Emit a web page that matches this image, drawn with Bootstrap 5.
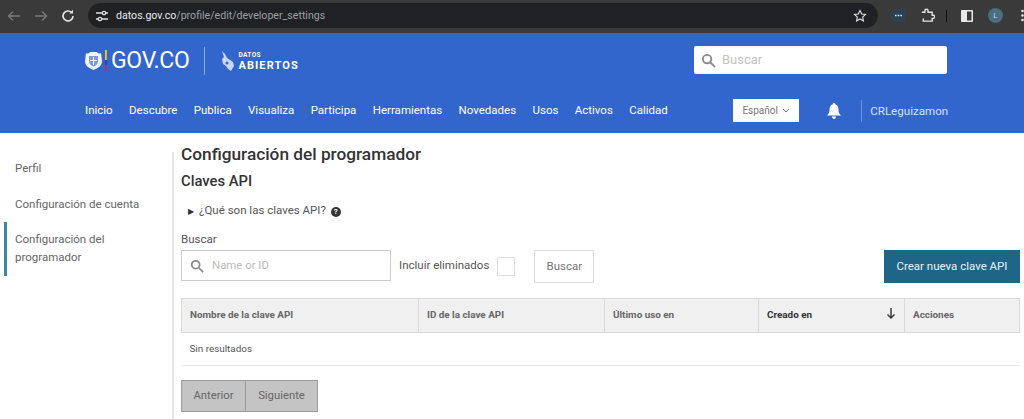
<!DOCTYPE html>
<html lang="es">
<head>
  <meta charset="UTF-8">
  <title>Configuración del programador</title>
  <link rel="stylesheet" href="https://cdn.jsdelivr.net/npm/bootstrap@5.3.3/dist/css/bootstrap.min.css">
  <style>
    html, body { height: 419px; overflow: hidden; }
    body { font-family: Roboto, "Liberation Sans", sans-serif; color: #4b4b4b; background: #fff; }

    /* browser bar */
    .browser-bar { height: 33px; background: #3a3a3a; padding: 3px 0 5px 6px; }
    .bar-btn { width: 16px; height: 16px; flex: none; margin-right: 11px; }
    .omnibox { width: 790px; height: 25px; margin-left: 1px; flex: none; border-radius: 13px; background: #202124; padding: 0 11px 0 7px; font-size: 10.6px; color: #9aa0a6; }
    .omnibox b { font-weight: 400; color: #e8eaed; }
    .url-text { margin-left: 7px; }
    .tool-a { margin-left: 14px; flex: none; }
    .tool-b { margin-left: 15px; flex: none; }
    .tool-sep { width: 1px; height: 12px; margin-left: 11px; background: #111; flex: none; }
    .tool-c { margin-left: 14px; flex: none; }
    .tool-d { margin-left: 15px; flex: none; }
    .tool-e { margin-left: 18px; flex: none; }
    .avatar-dot { width: 15px; height: 15px; border-radius: 50%; background: #4a6d80; color: #c9d8e0; font-size: 8px; line-height: 15px; text-align: center; }

    /* blue header */
    .site-head { height: 100px; background: #3366cc; color: #fff; padding: 0 77px 0 85px; }
    .brand-row { height: 55px; padding-top: 14px; }
    .brand-gov { font-size: 23px; line-height: 28px; letter-spacing: -.3px; margin-left: 3px; }
    .brand-sep { width: 1px; height: 28px; background: #8fa9e0; margin: 0 16px 0 15px; }
    .brand-map { margin-right: 3px; }
    .brand-datos { font-weight: 700; margin-top: 1px; }
    .brand-datos small { display: block; font-size: 6.5px; line-height: 8px; letter-spacing: .4px; }
    .brand-datos span { display: block; font-size: 11px; line-height: 13px; letter-spacing: 1.1px; }
    .head-search { width: 253px; height: 28px; margin-top: -1px; background: #fff; border-radius: 2px; padding-left: 7px; color: #c2c2c2; font-size: 13px; }
    .head-search span { margin-left: 6px; }
    .nav-row { height: 45px; font-size: 11.5px; }
    .nav-row a { color: #fff; text-decoration: none; margin-right: 16.4px; }
    .lang-btn { width: 66px; height: 23px; flex: none; background: #fff; color: #777; font-size: 10px; margin-left: 49px; margin-right: 28px; }
    .bell-icon { flex: none; }
    .user-box { border-left: 1px solid #6f90d8; height: 22px; padding-left: 8px; margin-left: 20px; color: #d5e0f5; font-size: 11.6px; line-height: 22px; white-space: nowrap; }

    /* page body */
    .side-col { width: 172px; flex: none; padding-top: 26px; font-size: 11.5px; color: #666; }
    .side-link { padding-left: 15px; margin-bottom: 18px; line-height: 18px; }
    .side-link.on { border-left: 3px solid #3a88a8; margin-left: 4px; padding: 8px 0 10px 8px; margin-top: -9px; }
    .main-col { width: 848px; border-left: 2px solid #e6e6e6; margin-top: 19px; padding-left: 7px; height: 270px; flex: none; }
    .page-title { font-size: 17.25px; font-weight: 500; color: #333; line-height: 20px; margin: -8px 0 7px; }
    .sub-title { font-size: 14.8px; font-weight: 500; color: #333; line-height: 20px; margin: 0 0 10px; }
    .what-row { font-size: 11.5px; padding-left: 7px; height: 18px; line-height: 18px; color: #555; margin-bottom: 12px; }
    .tri { font-size: 8px; margin-right: 5px; color: #333; }
    .help-dot { display: inline-block; width: 10px; height: 10px; border-radius: 50%; background: #333; color: #fff; font-size: 8px; line-height: 10px; text-align: center; font-weight: 700; margin-left: 2px; }
    .field-label { font-size: 11.5px; line-height: 16px; margin-bottom: 3px; color: #555; }
    .search-box { width: 210px; height: 31px; border: 1px solid #ccc; padding-left: 8px; color: #bbb; font-size: 11.4px; margin-top: -2px; }
    .search-box span { margin-left: 8px; }
    .include-lbl { font-size: 11.5px; color: #555; margin-left: 8px; margin-top: -2px; }
    .check-box { width: 18px; height: 19px; border: 1px solid #ddd; margin: 0 19px 0 8px; }
    .btn-plain.btn { width: 60px; height: 33px; padding: 0; border: 1px solid #ddd; border-radius: 0; color: #777; font-size: 11.5px; }
    .btn-make.btn { width: 136px; height: 33px; padding: 0; border: 0; border-radius: 0; background: #1e6587; color: #e8f3f8; font-size: 11.5px; }
    .key-table { margin: 15px 0 14px; width: 838px; table-layout: fixed; font-size: 9.9px; }
    .col-a { width: 237px; }
    .col-b { width: 186px; }
    .col-c { width: 154px; }
    .col-d { width: 146px; }
    .col-e { width: 115px; }
    .key-table th { height: 34px; padding: 0 8px; vertical-align: middle; background: #f0f0f0; border: 1px solid #d9d9d9; color: #666; font-weight: 700; }
    .key-table th.sorted { color: #333; }
    .sort-arrow { margin-top: -4px; }
    .key-table td { height: 33px; padding: 0 8px; vertical-align: middle; border-bottom: 1px solid #ececec; color: #555; }
    .page-btn.btn { height: 32px; padding: 0; background: #c4c4c4; border: 1px solid #9a9a9a; border-radius: 0; color: #666; font-size: 11.3px; }
    .page-prev { width: 65px; }
    .page-next { width: 73px; margin-left: -1px !important; }
  </style>
</head>
<body>

<div class="browser-bar d-flex align-items-center">
  <svg class="bar-btn" viewBox="0 0 16 16" fill="none" stroke="#777" stroke-width="1.4"><path d="M14 8H2.500M7 3.500 2.500 8 7 12.500"/></svg>
  <svg class="bar-btn" viewBox="0 0 16 16" fill="none" stroke="#777" stroke-width="1.4"><path d="M2 8h11.500M9 3.500 13.500 8 9 12.500"/></svg>
  <svg class="bar-btn" viewBox="0 0 16 16" fill="none" stroke="#e4e4e4" stroke-width="1.6"><path d="M13 8a5 5 0 1 1-1.500-3.600"/><path d="M13 1.800v3.600H9.400" fill="#e4e4e4" stroke="none"/></svg>
  <div class="omnibox d-flex align-items-center">
    <svg width="14" height="12" viewBox="0 0 14 12" fill="none" stroke="#e0e0e0" stroke-width="1.3"><path d="M1 3h6M11 3h2M1 9h2M7 9h6"/><circle cx="9" cy="3" r="1.700"/><circle cx="5" cy="9" r="1.700"/></svg>
    <span class="url-text"><b>datos.gov.co</b>/profile/edit/developer_settings</span>
    <svg class="ms-auto" width="14" height="14" viewBox="0 0 16 16" fill="none" stroke="#e0e0e0" stroke-width="1.3"><path d="m8 1.800 1.900 4 4.300.5-3.200 3 .9 4.300L8 11.400l-3.900 2.200.9-4.300-3.200-3 4.300-.5z"/></svg>
  </div>
  <svg class="tool-a" width="13" height="13" viewBox="0 0 13 13"><rect width="13" height="13" fill="#2c4254"/><path d="M3 6.500h1.600M5.700 6.500h1.600M8.400 6.500H10" stroke="#dfe6ea" stroke-width="1.500"/></svg>
  <svg class="tool-b" width="15" height="15" viewBox="0 0 16 16" fill="none" stroke="#e4e4e4" stroke-width="1.500"><path d="M2 4.500h3.200V3a1.700 1.700 0 0 1 3.400 0v1.500H13v3.200h1a1.700 1.700 0 0 1 0 3.400h-1V14H3.500v-2.800"/></svg>
  <span class="tool-sep"></span>
  <svg class="tool-c" width="12" height="12" viewBox="0 0 12 12"><rect width="12" height="12" rx="1" fill="#e8e8e8"/><rect x="6" y="1.500" width="4.500" height="9" fill="#3a3a3a"/></svg>
  <div class="avatar-dot tool-d">L</div>
  <svg class="tool-e" width="3" height="13" viewBox="0 0 3 13" fill="#e4e4e4"><circle cx="1.500" cy="2" r="1.300"/><circle cx="1.500" cy="6.500" r="1.300"/><circle cx="1.500" cy="11" r="1.300"/></svg>
</div>

<header class="site-head">
  <div class="brand-row d-flex justify-content-between">
    <div class="d-flex align-items-center align-self-start">
      <svg width="23" height="22" viewBox="0 0 23 22">
        <path d="M1 3c2 1 3 .5 4-1h7c1 1.500 2 2 4 1l1 8c0 5-4 7-8.500 9C4 18 0 16 0 11z" fill="#eef2fb"/>
        <path d="M4 6h9v5.500c0 2.500-2 4-4.500 5C6 15.500 4 14 4 11.500z" fill="#7f9ad8"/>
        <path d="M8.500 7v8M5 10.500h7" stroke="#fff"/>
        <rect x="20" y="0" width="1.800" height="10" fill="#f2c81e"/>
        <rect x="20" y="10" width="1.800" height="5" fill="#3a3fa8"/>
        <rect x="20" y="15" width="1.800" height="6" fill="#b5305f"/>
      </svg>
      <span class="brand-gov">GOV.CO</span>
      <span class="brand-sep"></span>
      <svg class="brand-map" width="14" height="22" viewBox="0 0 14 22" fill="#c9d6f3"><path d="M1 1l3 3 2 4 6 4 1 4-3 5-3-2-2-3-3-2-1-5 2-2z"/><circle cx="6" cy="13" r="1.500" fill="#3366cc"/></svg>
      <div class="brand-datos"><small>DATOS</small><span>ABIERTOS</span></div>
    </div>
    <div class="head-search d-flex align-items-center">
      <svg width="15" height="15" viewBox="0 0 16 16" fill="none" stroke="#8a8a8a" stroke-width="2"><circle cx="6.500" cy="6.500" r="4.500"/><path d="m10 10 5 5"/></svg>
      <span>Buscar</span>
    </div>
  </div>
  <nav class="nav-row d-flex align-items-center">
    <a href="#">Inicio</a><a href="#">Descubre</a><a href="#">Publica</a><a href="#">Visualiza</a><a href="#">Participa</a><a href="#">Herramientas</a><a href="#">Novedades</a><a href="#">Usos</a><a href="#">Activos</a><a href="#">Calidad</a>
    <div class="lang-btn d-flex align-items-center justify-content-center gap-1">Español
      <svg width="8" height="6" viewBox="0 0 8 6" fill="none" stroke="#777"><path d="m1 1 3 3 3-3"/></svg>
    </div>
    <svg class="bell-icon" width="14" height="16" viewBox="0 0 14 16" fill="#fff"><path d="M7 0c.8 0 1.200.6 1.200 1.300C10.500 2 11.500 4 11.500 6.500c0 3 .7 4.500 2.500 6H0c1.800-1.500 2.500-3 2.500-6 0-2.500 1-4.500 3.300-5.200C5.800.6 6.200 0 7 0zM5 13.500h4c0 1.500-1 2.500-2 2.500s-2-1-2-2.500z"/></svg>
    <div class="user-box">CRLeguizamon</div>
  </nav>
</header>

<div class="d-flex">
  <aside class="side-col">
    <div class="side-link">Perfil</div>
    <div class="side-link">Configuración de cuenta</div>
    <div class="side-link on">Configuración del programador</div>
  </aside>
  <main class="main-col">
    <h1 class="page-title">Configuración del programador</h1>
    <h2 class="sub-title">Claves API</h2>
    <div class="what-row"><span class="tri">&#9654;</span>¿Qué son las claves API? <span class="help-dot">?</span></div>
    <div class="field-label">Buscar</div>
    <div class="d-flex align-items-center">
      <div class="search-box d-flex align-items-center">
        <svg width="14" height="14" viewBox="0 0 16 16" fill="none" stroke="#8a8a8a" stroke-width="2"><circle cx="6.500" cy="6.500" r="4.500"/><path d="m10 10 5 5"/></svg>
        <span>Name or ID</span>
      </div>
      <span class="include-lbl">Incluir eliminados</span>
      <span class="check-box"></span>
      <button type="button" class="btn btn-plain">Buscar</button>
      <button type="button" class="btn btn-make ms-auto">Crear nueva clave API</button>
    </div>
    <table class="key-table">
      <colgroup><col class="col-a"><col class="col-b"><col class="col-c"><col class="col-d"><col class="col-e"></colgroup>
      <thead>
        <tr>
          <th>Nombre de la clave API</th>
          <th>ID de la clave API</th>
          <th>Último uso en</th>
          <th class="sorted">
            <div class="d-flex justify-content-between align-items-center">Creado en
              <svg class="sort-arrow" width="10" height="12" viewBox="0 0 10 12" fill="none" stroke="#333" stroke-width="1.400"><path d="M5 1v10M1.500 7.500 5 11l3.500-3.500"/></svg>
            </div>
          </th>
          <th>Acciones</th>
        </tr>
      </thead>
      <tbody>
        <tr><td colspan="5">Sin resultados</td></tr>
      </tbody>
    </table>
    <div class="d-flex">
      <button type="button" class="btn page-btn page-prev">Anterior</button>
      <button type="button" class="btn page-btn page-next">Siguiente</button>
    </div>
  </main>
</div>

<script src="https://cdn.jsdelivr.net/npm/bootstrap@5.3.3/dist/js/bootstrap.bundle.min.js"></script>
</body>
</html>
